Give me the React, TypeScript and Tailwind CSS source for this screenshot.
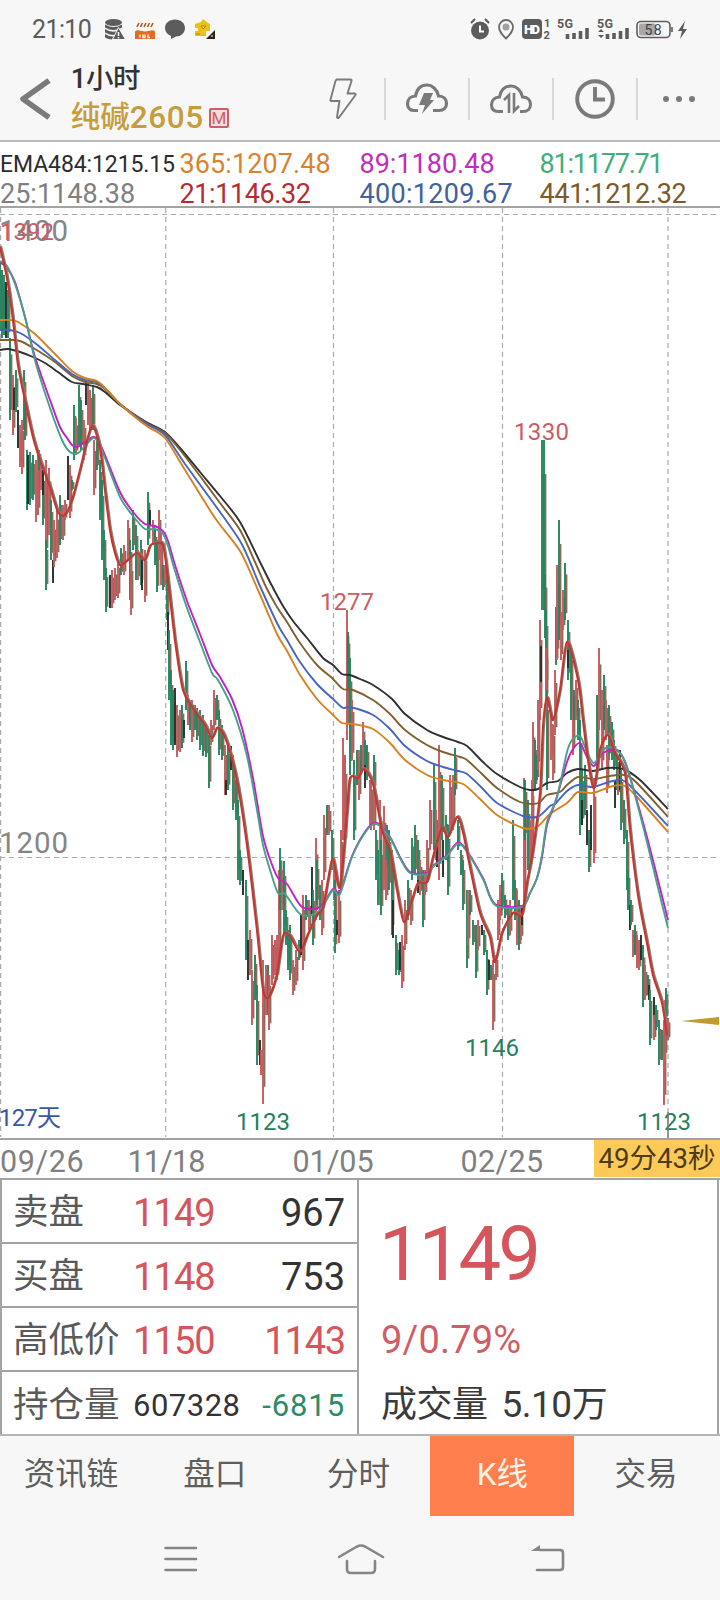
import React from "react";

const emaValues = [
  { text: "EMA484:1215.15", style: "text-[#2c2c2c] text-[23px] tracking-[-0.1px] pt-[2px]" },
  { text: "365:1207.48", style: "text-[#d98232] text-[27px] pt-px tracking-[0.1px]" },
  { text: "89:1180.48", style: "text-[#c22cc0] text-[27px] pt-px" },
  { text: "81:1177.71", style: "text-[#3fae7c] text-[27px] pt-px tracking-[-1.2px]" },
  { text: "25:1148.38", style: "text-[#808080] text-[27px] pt-px" },
  { text: "21:1146.32", style: "text-[#b52d33] text-[27px] pt-px tracking-[-0.4px]" },
  { text: "400:1209.67", style: "text-[#41619f] text-[27px] pt-px tracking-[0.3px]" },
  { text: "441:1212.32", style: "text-[#7d5a2a] text-[27px] pt-px tracking-[-0.3px]" },
];

const emaLines = [
  {
    color: "#2f3033",
    points:
      "0,350 8,349 20,352 33,357 45,363 58,372 72,382 83,384 97,387 105,392 120,405 135,415 148,423 165,432 180,448 200,472 220,496 240,522 260,562 271,584 283,606 293,621 307,638 323,658 333,665 342,674 350,675 360,679 373,685 392,699 405,714 427,730 443,737 458,742 467,746 483,762 497,774 520,787 530,790 538,789 547,783 558,781 567,773 578,769 593,771 607,768 623,769 640,780 668,809",
  },
  {
    color: "#80602f",
    points:
      "0,340 10,340 20,341 35,349 55,362 72,376 85,382 97,384 105,389 120,404 135,415 148,424 165,433 180,450 200,476 220,503 240,530 255,562 266,587 277,607 287,622 300,643 317,665 332,678 343,689 353,690 373,700 390,714 405,730 427,745 443,752 460,757 467,760 482,774 497,788 520,802 533,804 540,802 547,795 560,792 567,785 578,777 593,779 610,776 625,775 637,783 668,817",
  },
  {
    color: "#4565c0",
    points:
      "0,330 10,330 20,333 35,343 55,360 72,374 85,380 97,382 105,388 120,404 135,416 148,425 165,435 185,464 220,512 240,541 250,562 260,586 278,625 287,640 300,662 317,684 333,699 343,708 350,707 373,715 390,729 405,746 427,761 443,767 458,771 467,774 482,788 497,803 523,816 537,817 544,812 550,806 556,803 567,791 578,785 593,787 613,781 627,783 668,826",
  },
  {
    color: "#d9801f",
    points:
      "0,320 10,320 18,322 35,334 55,354 72,371 85,378 97,381 105,388 120,404 135,417 148,427 165,438 185,470 215,518 240,551 258,590 277,634 287,651 300,675 317,699 332,714 342,723 353,724 373,729 390,743 405,760 427,775 443,780 463,784 480,799 497,815 523,828 537,827 550,814 567,803 578,792 593,793 613,786 625,786 637,797 668,832",
  },
  {
    color: "#c21fcb",
    points:
      "0,262 7,268 15,282 25,317 33,350 38,366 50,400 60,427 67,438 72,445 77,447 85,442 93,437 98,440 105,455 120,492 133,512 145,524 155,526 163,531 168,541 175,565 187,601 200,634 212,665 220,677 232,699 242,728 253,778 263,836 271,862 278,878 287,884 302,907 320,907 333,889 340,892 352,856 367,829 377,823 390,837 400,857 410,872 427,873 434,865 447,855 457,843 465,848 483,878 495,904 522,906 530,893 537,878 542,857 547,825 555,803 567,762 573,749 580,743 587,757 594,766 603,753 617,750 625,762 633,787 647,837 663,900 668,920",
  },
  {
    color: "#46a287",
    points:
      "0,261 7,266 15,284 25,317 33,352 38,371 50,408 62,440 70,452 78,453 85,446 93,438 98,442 105,458 120,497 133,516 145,529 155,529 163,534 168,546 175,571 187,608 200,642 212,673 218,680 233,710 247,756 257,810 263,845 271,873 278,893 285,894 300,914 315,914 323,906 333,890 340,894 352,857 367,830 377,824 390,838 400,858 410,873 427,874 434,866 447,856 457,844 465,849 483,879 495,905 522,907 530,893 537,878 542,855 547,822 557,797 567,752 572,740 580,736 587,752 594,763 603,750 610,747 617,750 625,761 633,788 645,834 661,900 668,928",
  },
];

const shortLine =
  "0,247 7,278 13,320 18,365 25,400 33,437 40,460 50,487 58,512 65,515 72,500 80,470 88,437 93,426 100,448 105,490 110,530 115,553 120,565 128,560 137,553 145,560 150,546 157,543 163,545 167,571 175,640 183,690 193,708 205,725 212,738 217,728 223,733 230,752 238,786 247,845 257,930 263,989 269,997 277,974 283,936 290,936 300,952 308,934 317,915 323,908 328,880 333,859 340,887 347,812 350,778 358,778 364,769 373,784 382,830 390,850 397,890 404,922 412,900 418,883 427,882 433,857 442,828 448,837 457,817 463,832 470,867 480,913 490,937 495,962 502,933 513,913 522,915 527,883 533,850 540,793 543,727 547,698 553,720 560,690 567,642 578,680 583,720 588,760 594,788 600,750 608,735 615,753 625,773 630,830 638,895 647,943 653,975 662,1003 667,1035";

// smooth curve through the points
const toPath = (points: string) => {
  const p = points.split(" ").map((s) => s.split(",").map(Number));
  let d = `M${p[0][0]} ${p[0][1]}`;
  for (let i = 0; i < p.length - 1; i++) {
    const a = p[i - 1] || p[i];
    const b = p[i];
    const c = p[i + 1];
    const e = p[i + 2] || c;
    d += `C${b[0] + (c[0] - a[0]) / 7} ${b[1] + (c[1] - a[1]) / 7} ${c[0] - (e[0] - b[0]) / 7} ${c[1] - (e[1] - b[1]) / 7} ${c[0]} ${c[1]}`;
  }
  return d;
};

// side, x, high, low
const candles = `
g0 262 330,g2 270 338,g4 275 335,k6 282 338,g8 290 338,g10 338 420,r13 375 435,k14 388 410,g16 370 412,k18 410 448,r20 425 467,r22 420 474,g24 370 430,g25 405 440,g27 450 510,k28 455 504,g30 452 505,g33 455 500,r36 460 522,r38 455 515,g39 450 470,r41 465 490,g43 470 525,k43 470 495,r46 460 560,g46 540 590,r49 468 535,g51 500 560,k53 560 583,r54 520 567,r57 510 558,g60 495 545,r63 505 540,r65 500 520,k68 456 500,r70 465 518,g72 480 490,g74 405 460,r76 418 455,g79 385 445,g81 400 450,r84 420 460,k86 380 405,r88 382 425,r90 390 430,g93 385 430,r94 440 495,g97 430 470,g100 460 520,g102 480 560,g104 530 580,g106 568 612,k110 575 608,r112 570 608,r115 568 600,r118 560 598,g121 548 575,r124 545 575,r128 520 560,g130 540 600,r131 560 615,g133 510 550,g136 525 580,r138 550 580,g141 540 585,k142 560 590,r145 550 602,g148 492 545,k150 510 525,r153 520 545,g155 530 565,g157 540 592,r159 510 560,r161 530 585,g163 565 590,r165 565 585,
g167 580 620,k168 612 650,g169 630 700,g171 670 745,g173 690 750,k175 688 745,r177 705 757,r180 710 752,g182 705 748,k184 720 738,g186 661 710,r188 695 725,g190 700 730,r192 700 742,g195 705 730,g197 708 740,g200 710 750,g203 715 756,g206 725 757,g209 735 788,r211 720 745,r214 690 730,g217 695 720,g219 710 755,g222 725 760,r225 745 795,k226 780 795,g228 745 790,k231 746 770,g233 755 810,g236 780 820,g238 800 880,g240 850 885,k243 870 895,g246 880 960,k248 940 980,r250 930 975,r252 970 1025,g255 955 1000,g257 985 1065,k260 1040 1065,r261 1050 1075,r263 960 1104,r266 965 1015,g268 965 1015,r269 975 1030,r272 935 985,r275 940 975,r277 935 980,r279 870 960,g280 848 910,r282 870 910,g284 861 935,g286 910 945,g288 930 970,g290 925 980,r293 960 995,r296 950 985,g299 940 960,k301 915 955,r303 895 970,g306 895 920,r309 900 930,k312 867 915,g313 890 945,r316 838 920,g317 860 905,g320 885 920,r322 880 935,r324 815 880,g327 805 835,r329 805 835,g332 830 870,r334 860 900,g335 880 953,k337 920 935,r339 890 943,r341 830 890,r343 738 840,r345 755 850,r347 610 740,g348 632 690,g350 658 775,r352 700 760,g354 760 840,g357 750 785,r359 750 800,g361 745 770,r363 722 770,g365 740 770,k365 765 788,g367 745 780,r370 780 825,r371 780 830,g374 755 790,r374 790 830,
g376 830 880,g378 850 905,r380 800 905,g381 840 915,r384 806 890,g387 825 870,r386 860 900,g389 830 890,g392 850 935,k393 900 938,g396 935 975,g399 950 975,k400 942 970,r402 935 988,r405 900 950,g408 880 920,r411 890 925,g412 838 880,g415 825 875,g418 840 890,k418 880 893,r420 860 895,g423 870 927,r425 870 895,r427 840 880,r430 800 850,g434 765 850,r436 810 860,k437 840 867,r439 745 880,g442 775 840,k443 840 877,g446 815 860,g448 825 895,r450 775 835,r453 775 830,g455 748 795,g458 820 850,g461 850 875,g463 860 910,g467 890 968,r468 890 945,g470 890 915,g473 920 945,g476 925 978,r478 920 950,k482 925 935,g484 930 955,g487 950 995,k489 960 980,g491 965 980,r493 960 1030,r496 955 980,r498 900 940,r500 885 920,g502 873 910,g505 895 918,g508 905 940,r510 900 935,g513 820 900,g515 880 920,r517 890 945,g519 900 950,r521 905 940,k522 905 925,r524 778 905,g525 780 840,g528 800 870,r530 820 870,r532 780 860,r533 722 800,g535 740 790,g537 755 780,r538 700 770,r540 620 720,k541 646 682,g542 440 610,g544 440 610,g545 575 638,g546 610 690,r546 648 700,g547 690 790,r551 715 760,r553 725 780,r555 670 735,g556 607 665,r557 565 660,g559 520 640,r561 612 660,r563 590 630,g565 563 620,g568 620 680,k568 650 668,g571 645 720,r573 690 755,g574 690 720,r576 680 720,g578 700 740,g580 720 835,g582 770 825,k582 800 825,g585 765 815,k587 810 845,g589 830 872,k591 805 850,r594 780 863,g597 695 780,r599 648 730,r602 690 770,g604 675 730,r606 700 740,g609 705 760,g612 722 760,r607 745 793,g614 740 770,g617 755 790,k615 780 808,r618 770 795,k620 750 790,g621 770 830,g624 800 844,g627 830 890,
g628 870 910,k630 905 930,g631 900 925,r633 930 957,g635 925 955,r637 935 968,r639 940 970,k641 935 960,g643 945 1007,r645 965 1000,g648 975 995,k649 985 1000,g650 990 1045,k654 997 1020,r654 1015 1040,g656 1005 1030,g659 1020 1065,g662 1030 1060,r664 1020 1105,r665 1000 1060,g666 988 1020,r668 1018 1040`
  .split(",")
  .map((item) => item.trim())
  .map((item) => {
    const [x, high, low] = item.slice(1).split(" ").map(Number);
    return { side: item[0], x, high, low };
  });

const sideColor: Record<string, string> = { r: "#c65a5f", g: "#25855f", k: "#25302c" };

const rows = [
  { label: "卖盘", first: "1149", second: "967", firstStyle: "text-[38px] tracking-[-0.9px] text-[#d6555c]", secondStyle: "text-[38px] text-[#333333]" },
  { label: "买盘", first: "1148", second: "753", firstStyle: "text-[38px] tracking-[-0.9px] text-[#d6555c]", secondStyle: "text-[38px] text-[#333333]" },
  { label: "高低价", first: "1150", second: "1143", firstStyle: "text-[38px] tracking-[-0.9px] text-[#d6555c]", secondStyle: "text-[38px] tracking-[-1.2px] text-[#d6555c]" },
  { label: "持仓量", first: "607328", second: "-6815", firstStyle: "text-[31px] tracking-[0.5px] text-[#333333]", secondStyle: "text-[31px] tracking-[0.9px] text-[#2a8c68]" },
];

const tabs = ["资讯链", "盘口", "分时", "K线", "交易"];

const StatusBar = () => (
  <div className="h-[58px] pl-[32px] pr-[32px] pt-px flex items-center justify-between text-[#5c5c5c]">
    <div className="flex items-center">
      <span className="text-[25px] leading-none w-[72px] tracking-[-0.6px]">21:10</span>
      <svg width="112" height="24" viewBox="0 0 112 24">
        <g fill="#5c5c5c">
          <ellipse cx="9.500" cy="4.500" rx="8.500" ry="3.500" />
          <path d="M1 6.500q8.500 5 17 0v3q-8.500 5-17 0zM1 11q6 4 12 2l-2 4q-6 0-10-2.500zM1 16q5 3 9 2.500l-2 3q-4 0-7-2z" />
          <path d="M14.500 9.500l7 12h-13z" stroke="#f7f7f7" />
        </g>
        <path d="M14.500 14v4M14.500 19v1.500" stroke="#fff" strokeWidth="1.500" />
        <rect x="31" y="1" width="20" height="20" rx="3" fill="#fff8f0" />
        <path d="M33 9l2-4M36.500 9l2-4M40 9l2-4M43.500 9l2-4M47 9l2-4" stroke="#a5552a" strokeWidth="1.600" />
        <path d="M31 13.500q2-2 4-1l6 1 6-1q3-1 4 1V21H31z" fill="#e36b22" />
        <path d="M36 16.500v3M39 16.500v3h2v-3M44 16.500v3h2" fill="none" stroke="#fff" strokeWidth="1.300" />
        <path d="M71 1.500c5.500 0 10 3.500 10 8.500s-4.500 8.500-9 8.500L67 21v-3c-4-1.500-6-4.500-6-8 0-5 4.500-8.500 10-8.500z" fill="#5c5c5c" />
        <path d="M91 6l6-2 2-3 5 4 2 1v7h-4v5H91v-5h3v-3h-3z" fill="#e9c218" />
        <path d="M97 8h5l-3 3zM92 16h4" stroke="#b48809" fill="#f7da4a" />
        <path d="M111 12v9H102z" fill="#2d2417" />
        <path d="M107 18h2" stroke="#f7f7f7" />
      </svg>
    </div>
    <svg width="218" height="24" viewBox="0 0 218 24" fontFamily="Roboto, sans-serif">
      <circle cx="10" cy="12.500" r="9" fill="#5c5c5c" />
      <path d="M1 5l4-4M19 5l-4-4" stroke="#5c5c5c" strokeWidth="2" />
      <path d="M10 7.500v6h4" fill="none" stroke="#fff" strokeWidth="2" />
      <path d="M36 20.500c-4-4-7-7-7-11.500a7 7 0 0114 0c0 4.500-3 7.500-7 11.500z" fill="none" stroke="#6a6a6a" strokeWidth="1.800" />
      <circle cx="36" cy="9" r="3.500" fill="#a0a0a0" />
      <rect x="52" y="1" width="20" height="20" rx="4" fill="#5c5c5c" />
      <text x="54" y="16" fontSize="13" fontWeight="900" fill="#fff" textLength="16">HD</text>
      <g fill="#5c5c5c" fontWeight="700">
        <text x="74" y="9" fontSize="11">1</text>
        <text x="73.500" y="20.500" fontSize="11">2</text>
        <text x="87" y="10" fontSize="12.500" textLength="16">5G</text>
        <text x="127" y="10" fontSize="12.500" textLength="16">5G</text>
      </g>
      <path d="M97.500 16v5M104 15v6M110.500 13v8M117 10v11M137.500 16v5M144 15v6M150.500 13v8M157 10v11" stroke="#5c5c5c" strokeWidth="3.600" />
      <path d="M128 14l3-3 3 3zM128 17l3 3 3-3z" fill="#5c5c5c" />
      <rect x="167" y="3.500" width="33" height="16" rx="4" fill="none" stroke="#5c5c5c" strokeWidth="1.600" />
      <rect x="169" y="5.500" width="17" height="12" rx="2" fill="#a8a8a8" />
      <path d="M202 9v5" stroke="#5c5c5c" strokeWidth="1.600" />
      <text x="174.500" y="16.500" fontSize="14" fill="#444" textLength="17">58</text>
      <path d="M215 3l-7 10h4l-2 8 7-10h-4z" fill="#5c5c5c" />
    </svg>
  </div>
);

const Header = () => (
  <header className="h-[84px] border-b-2 border-[#b9b9b9] flex">
    <div className="w-[71px] pl-[19px] pt-[20px]">
      <svg width="32" height="42" viewBox="0 0 32 42" fill="none" stroke="#7a7a7a" strokeWidth="5.500">
        <path d="M30 2.500L4 21l26 18.500" strokeLinejoin="round" />
      </svg>
    </div>
    <div className="w-[232px] pt-px">
      <h1 className="text-[27.5px] leading-[40px] font-medium text-[#333333] tracking-[-0.5px]">1小时</h1>
      <div className="flex items-center h-[38px] text-[#c79d3b]">
        <span className="text-[29.5px] font-medium leading-none">纯碱</span>
        <span className="text-[31.5px] font-medium leading-none tracking-[0.6px]">2605</span>
        <span className="ml-[5px] w-[20px] h-[20px] border-2 border-[#cd5e68] bg-[#f8dcdf] text-[#cd5e68] text-[17px] leading-[17px] text-center rounded-[2px]">M</span>
      </div>
    </div>
    <div className="flex pt-[20px]">
      <div className="w-[84px] h-[42px] border-r-2 border-[#d8d8d8] flex justify-center">
        <svg width="28" height="42" viewBox="0 0 28 42" fill="none" stroke="#7a7a7a" strokeWidth="1.900" strokeLinejoin="round">
          <path d="M7.500 1.500h14q1.500 0 1 1.500l-4 12.500h7q1.500 0 1 1.500L10 39.500q-1.500 1.500-2-.5L10.500 23H2.500q-1.500 0-1-1.500l5-18.500z" />
        </svg>
      </div>
      <div className="w-[84px] h-[42px] border-r-2 border-[#d8d8d8] flex justify-center">
        <svg width="44" height="42" viewBox="0 0 44 42" fill="none" stroke="#7a7a7a" strokeWidth="3.200">
          <path d="M13 32.500H9.500C5 32.500 2.500 30 2.500 26c0-5 3.500-8 8-8C12 10 17 7 22 7s10 4 11.500 11c5 0 8 3 8 7.500S38.500 32.500 34 32.500h-6" />
          <path d="M19 15h9l-3 7h4L17 36l3-9h-6z" fill="#7a7a7a" stroke="none" />
        </svg>
      </div>
      <div className="w-[84px] h-[42px] border-r-2 border-[#d8d8d8] flex justify-center">
        <svg width="44" height="42" viewBox="0 0 44 42" fill="none" stroke="#7a7a7a" strokeWidth="3">
          <path d="M14 33.500H9.500C5 33.500 2.500 31 2.500 27c0-5 3.500-8 8-8C12 11 17 8 22 8s10 4 11.500 11c5 0 8 3 8 7.500S38.500 33.500 34 33.500h-3" />
          <path d="M20 35V17l-5 5M25 15v18l5-5" strokeWidth="2.600" />
        </svg>
      </div>
      <div className="w-[84px] h-[42px] border-r-2 border-[#d8d8d8] flex justify-center">
        <svg width="42" height="42" viewBox="0 0 42 42" fill="none" stroke="#7a7a7a" strokeWidth="3.900">
          <circle cx="21" cy="21" r="17.800" />
          <path d="M21 9v12.500h10" />
        </svg>
      </div>
      <div className="w-[82px] h-[42px] flex items-center justify-center gap-[7px]">
        <span className="w-[6px] h-[6px] rounded-full bg-[#7a7a7a]" />
        <span className="w-[6px] h-[6px] rounded-full bg-[#7a7a7a]" />
        <span className="w-[6px] h-[6px] rounded-full bg-[#7a7a7a]" />
      </div>
    </div>
  </header>
);

const Chart = () => (
  <svg className="block" width="720" height="930" viewBox="0 208 720 930" fontFamily="Roboto, 'Noto Sans CJK SC', sans-serif">
    <g stroke="#a9a9a9" strokeWidth="1.200" strokeDasharray="5 4">
      <path d="M0 214.500H720M0 857.500H720" />
      <path d="M0.600 208V1137M165.700 208V1137M333.500 208V1137M502.500 208V1137M668 208V1137" />
    </g>
    <text x="-1" y="241" fontSize="29.500" fill="#858585" textLength="69">1400</text>
    <text x="-1" y="853" fontSize="29.500" fill="#858585" textLength="69">1200</text>

    {candles.map((item, ind) => (
      <g key={ind}>
        {item.side !== "k" && (
          <path
            d={`M${item.x + 1.4} ${item.high + (item.low - item.high) * 0.2}V${item.low - (item.low - item.high) * 0.12}`}
            stroke="#8a6c5b"
            strokeWidth="2"
          />
        )}
        <path d={`M${item.x} ${item.high}V${item.low}`} stroke={sideColor[item.side]} strokeWidth="1.900" />
      </g>
    ))}

    {emaLines.map((line) => (
      <path key={line.color} d={toPath(line.points)} fill="none" stroke={line.color} strokeWidth="1.900" />
    ))}
    <path d={toPath(shortLine)} transform="translate(1.200 -1)" fill="none" stroke="#8f7d75" strokeWidth="1.800" />
    <path d={toPath(shortLine)} fill="none" stroke="#c4362f" strokeWidth="2.200" />

    <g fontSize="24" fill="#cd5b66">
      <text x="0" y="240" textLength="54">1392</text>
      <text x="320" y="610" textLength="54">1277</text>
      <text x="514" y="440" textLength="55">1330</text>
    </g>
    <g fontSize="24" fill="#26805f">
      <text x="236" y="1130" textLength="54">1123</text>
      <text x="465" y="1056" textLength="54">1146</text>
      <text x="637" y="1130" textLength="54">1123</text>
    </g>
    <text x="-1" y="1126" fontSize="24" fill="#3a57a6" textLength="62">127天</text>
    <path d="M668 1112V1138" stroke="#777" strokeWidth="1.500" />
    <path d="M681 1021L719 1017V1025Z" fill="#c29a2e" />
  </svg>
);

const App = () => {
  return (
    <main className="w-[720px] h-[1600px] overflow-hidden bg-[#f7f7f7] font-[Roboto,'Noto_Sans_CJK_SC',sans-serif]">
      <StatusBar />
      <Header />

      <section className="bg-white">
        <div className="h-[66px] pt-[6px] border-b-2 border-[#a3a3a3] grid grid-cols-[179.500px_180px_180px_180px] auto-rows-[30px]">
          {emaValues.map((item) => (
            <span key={item.text} className={`${item.style} leading-[30px] whitespace-nowrap`}>
              {item.text}
            </span>
          ))}
        </div>
        <Chart />
        <div className="h-[42px] border-y-2 border-[#a3a3a3] flex text-[30.5px] leading-[44px] text-[#808080]">
          <span className="w-[83px] tracking-[0.6px]">09/26</span>
          <span className="w-[166px] text-center tracking-[-0.8px]">11/18</span>
          <span className="w-[168px] text-center">01/05</span>
          <span className="w-[170px] text-center tracking-[0.4px]">02/25</span>
          <span className="ml-[7px] w-[126px] h-[37px] bg-[#fdc958] text-[#4b3c1c] text-[27.5px] leading-[38px] text-center whitespace-nowrap">
            49分43秒
          </span>
        </div>
      </section>

      <section className="h-[256px] bg-white border-b-2 border-[#b5b5b5] flex">
        <div className="w-[359px] border-x-2 border-[#a3a3a3]">
          {rows.map((item) => (
            <div key={item.label} className="h-[64px] border-b-2 last:border-b-0 border-[#a3a3a3] flex items-center pt-[3px] pl-[11px] pr-[12px]">
              <span className="w-[120px] text-[35.5px] leading-none text-[#5a5a5a] whitespace-nowrap">{item.label}</span>
              <span className={`${item.firstStyle} leading-none`}>{item.first}</span>
              <span className={`${item.secondStyle} leading-none ml-auto`}>{item.second}</span>
            </div>
          ))}
        </div>
        <div className="flex-1 border-r-2 border-[#a3a3a3] mr-px pl-[20px]">
          <p className="pt-[34px] text-[76px] leading-[80px] text-[#d6555c] tracking-[-3px]">1149</p>
          <p className="pt-[24px] pl-[2px] text-[38px] leading-[44px] text-[#cf5d66] tracking-[0.2px]">9/0.79%</p>
          <p className="pt-[16px] pl-[2px] text-[36px] leading-[54px] text-[#3a3a3a] tracking-[-0.5px]">
            成交量<span className="ml-[14px] text-[37px]">5.10</span>万
          </p>
        </div>
      </section>

      <nav className="h-[80px] mr-[2px] -ml-px grid grid-cols-5">
        {tabs.map((tab) => (
          <button
            key={tab}
            className={`text-[31.5px] pb-[2px] ${tab === "K线" ? "bg-[#ff7e4d] text-[#fff3e6]" : "text-[#5e5e5e]"}`}
          >
            {tab}
          </button>
        ))}
      </nav>

      <div className="h-[84px] pt-px flex items-center justify-center gap-[139px] pl-[10px] text-[#858585]">
        <svg width="34" height="28" viewBox="0 0 34 28" stroke="currentColor" strokeWidth="2.600" strokeLinecap="round">
          <path d="M1.500 3H32M1.500 14H32M1.500 25H32" />
        </svg>
        <svg width="48" height="32" viewBox="0 0 48 32" fill="none" stroke="currentColor" strokeWidth="2.600" strokeLinecap="round" strokeLinejoin="round">
          <path d="M2 14L20 3.500Q24 1.500 28 3.500L46 14M10 18v8q0 4 4 4h20q4 0 4-4v-8" />
        </svg>
        <svg className="ml-[6px]" width="36" height="28" viewBox="0 0 36 28" fill="none" stroke="currentColor" strokeWidth="2.600" strokeLinecap="round">
          <path d="M10 5h20q3 0 3 3v14q0 3-3 3H7" />
          <path d="M1 6L10 0v6z" fill="currentColor" stroke="none" />
        </svg>
      </div>
    </main>
  );
};

export default App;
